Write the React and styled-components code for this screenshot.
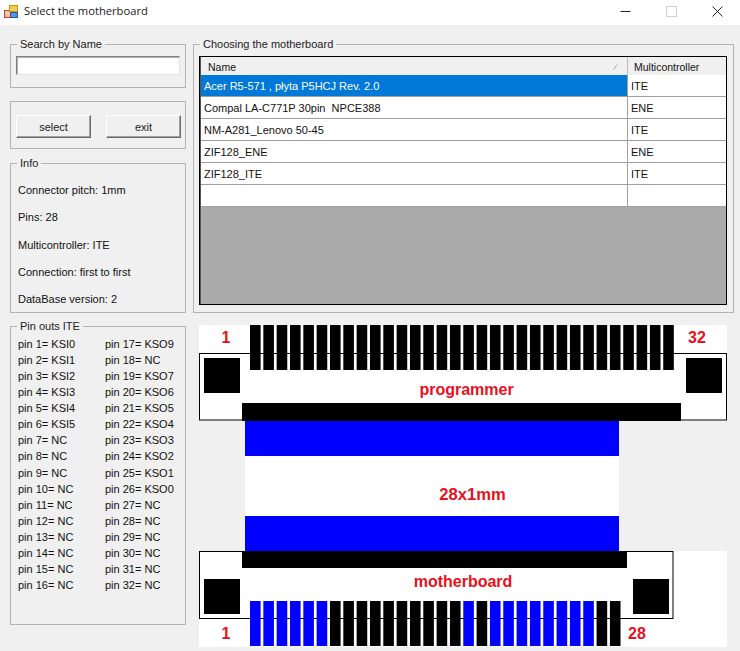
import React from "react";
import styled, { createGlobalStyle } from "styled-components";

const Global = createGlobalStyle`
  html, body { margin: 0; padding: 0; background: #f0f0f0; }
  * { box-sizing: border-box; }
`;

const Win = styled.div`
  width: 740px; height: 651px; overflow: hidden; background: #f0f0f0;
  font-family: "Liberation Sans", Arial, sans-serif; font-size: 11px; color: #111;
`;
const TitleBar = styled.header`
  height: 25px; background: #fff; display: flex; align-items: center; padding-left: 4px;
`;
const Title = styled.span`
  font-family: "Open Sans", sans-serif; font-size: 11.2px; margin-left: 6px; color: #222; flex: 1; margin-top: -5px;
`;
const WinButton = styled.div`
  width: 46px; height: 25px; display: flex; align-items: center; justify-content: center; margin-top: -3px;
`;
const Main = styled.main`
  display: grid; grid-template-columns: 176px 1fr; column-gap: 7px; padding: 12px 6px 0 10px;
`;
const Column = styled.div`
  display: flex; flex-direction: column;
`;
const Group = styled.fieldset`
  margin: ${p => p.$mt || 0}px 0 0; padding: 0; border: 1px solid #b4b4b4; height: ${p => p.$h}px; min-width: 0;
  display: flex; flex-direction: column;
  legend { margin-left: 6px; padding: 0 3px; line-height: 14px; font-size: 11px; color: #222; }
`;
const SearchBody = styled.div` padding: 5px 5px 0; `;
const SearchInput = styled.input`
  display: block; width: 164px; height: 19px; background: #fff; padding: 0;
  border-style: solid; border-width: 1px; border-color: #828282 #e4e4e4 #e4e4e4 #828282; box-shadow: inset 1px 1px 0 #b0b0b0;
`;
const Buttons = styled.div`
  display: flex; justify-content: space-between; padding: 13px 4px 0 5px;
`;
const Btn = styled.button`
  width: 75px; height: 23px; padding: 0; background: #f0f0f0; font: inherit; color: #222;
  border-style: solid; border-width: 1px; border-color: #fff #6a6a6a #6a6a6a #fff; box-shadow: inset -1px -1px 0 #a0a0a0;
`;
const InfoBody = styled.div`
  padding: 13px 0 0 7px; display: flex; flex-direction: column; row-gap: 13.35px; line-height: 14px;
`;
const PinGrid = styled.div`
  padding: 4px 0 0 7px; display: grid; grid-auto-flow: column; grid-template-rows: repeat(16, 16.07px); grid-template-columns: 87px 1fr; line-height: 14px;
`;
const TableFrame = styled.div`
  margin: 5px 5px 0; width: 528px; height: 249px; border: 1px solid #000; background: #ababab; box-shadow: inset 1px 1px 0 #555;
  display: flex; flex-direction: column; padding-left: 1px;
`;
const Row = styled.div`
  display: grid; grid-template-columns: 427px 98px; height: ${p => p.$h || 22}px; flex: none;
`;
const HeadCell = styled.div`
  background: #f0f0f0; display: flex; align-items: center; justify-content: space-between; padding: 2px 9px 0 ${p => p.$pl}px; border-right: ${p => p.$line ? "1px solid #b8b8b8" : "none"}; font-size: 10.5px;
`;
const Cell = styled.div`
  padding-left: ${p => p.$pl}px; line-height: 22px; overflow: hidden; white-space: pre;
  background: ${p => p.$sel ? "#0078d7" : "#fff"}; color: ${p => p.$sel ? "#fff" : "#111"};
  border-bottom: 1px solid #a0a0a0; border-right: ${p => p.$last ? "none" : "1px solid #a0a0a0"};
`;
const Sort = styled.svg` display: block; `;
const Diagram = styled.svg`
  display: block; width: 541px; height: 328px; margin-top: 6px;
`;
const Label = styled.text`
  font-family: "Liberation Sans", Arial, sans-serif; font-weight: 700; font-size: ${p => p.$size || 16}px; fill: #e8101c; text-anchor: middle;
`;

const pins = [
  "KSI0","KSI1","KSI2","KSI3","KSI4","KSI5","NC","NC","NC","NC","NC","NC","NC","NC","NC","NC",
  "KSO9","NC","KSO7","KSO6","KSO5","KSO4","KSO3","KSO2","KSO1","KSO0","NC","NC","NC","NC","NC","NC",
];
const rows = [
  ["Acer R5-571 , płyta P5HCJ Rev. 2.0","ITE"],
  ["Compal LA-C771P 30pin  NPCE388","ENE"],
  ["NM-A281_Lenovo 50-45","ITE"],
  ["ZIF128_ENE","ENE"],
  ["ZIF128_ITE","ITE"],
  ["",""],
];
const info = ["Connector pitch: 1mm","Pins: 28","Multicontroller: ITE","Connection: first to first","DataBase version: 2"];
const bluePin = i => i < 6 || i === 16 || (i >= 18 && i < 26);

function AppIcon() {
  return (
    <svg width="14" height="14" viewBox="0 0 14 14" style={{ flex: "none", marginTop: -3 }}>
      <rect x="0.5" y="6.5" width="6" height="7" fill="#f3c5a5" stroke="#cf3f28" />
      <rect x="5.5" y="1.5" width="8" height="6" fill="#f0cc50" stroke="#c8961e" />
      <rect x="6.5" y="8.5" width="7" height="5" fill="#5b8fe0" stroke="#2a55a0" />
    </svg>
  );
}

function Board() {
  // origin of the drawing is page (193, 319)
  const X = x => x - 193, Y = y => y - 319;
  return (
    <Diagram viewBox="0 0 541 328">
      <rect x={X(199)} y={Y(325)} width="528" height="96" fill="#fff" />
      <rect x={X(199.5)} y={Y(353.5)} width="527" height="66.5" fill="#fff" stroke="#000" />
      {Array.from({ length: 32 }, (_, i) => (
        <rect key={i} x={X(250 + i * 13.33)} y={Y(325)} width="10.6" height="45" fill="#000" />
      ))}
      <rect x={X(204)} y={Y(358)} width="36" height="35" fill="#000" />
      <rect x={X(686)} y={Y(358)} width="36" height="35" fill="#000" />
      <rect x={X(242)} y={Y(403)} width="439" height="18" fill="#000" />
      <Label x={X(226)} y={Y(343)}>1</Label>
      <Label x={X(697)} y={Y(343)}>32</Label>
      <Label x={X(466.5)} y={Y(395)}>programmer</Label>

      <rect x={X(245)} y={Y(421)} width="374" height="35" fill="#0000ff" />
      <rect x={X(245)} y={Y(456)} width="374" height="60" fill="#fff" />
      <rect x={X(245)} y={Y(516)} width="374" height="35" fill="#0000ff" />
      <Label $size={16.6} x={X(472.5)} y={Y(500)}>28x1mm</Label>

      <rect x={X(199)} y={Y(551)} width="528" height="96" fill="#fff" />
      <rect x={X(199.5)} y={Y(551.5)} width="473.5" height="67" fill="#fff" stroke="#000" />
      {Array.from({ length: 28 }, (_, i) => (
        <rect key={i} x={X(250 + i * 13.33)} y={Y(601)} width="10.6" height="45" fill={bluePin(i) ? "#0000ff" : "#000"} />
      ))}
      <rect x={X(204)} y={Y(579)} width="36" height="35" fill="#000" />
      <rect x={X(633)} y={Y(579)} width="36" height="35" fill="#000" />
      <rect x={X(242)} y={Y(551)} width="385" height="17" fill="#000" />
      <Label x={X(226)} y={Y(639)}>1</Label>
      <Label x={X(637)} y={Y(639)}>28</Label>
      <Label x={X(463)} y={Y(587)}>motherboard</Label>
    </Diagram>
  );
}

export default function App() {
  return (
    <Win>
      <Global />
      <TitleBar>
        <AppIcon />
        <Title>Select the motherboard</Title>
        <WinButton>
          <svg width="11" height="11" viewBox="0 0 11 11"><path d="M0.5 5.5H10.5" stroke="#222" /></svg>
        </WinButton>
        <WinButton>
          <svg width="11" height="11" viewBox="0 0 11 11"><rect x="0.5" y="0.5" width="10" height="10" fill="none" stroke="#d0d0d0" /></svg>
        </WinButton>
        <WinButton>
          <svg width="11" height="11" viewBox="0 0 11 11"><path d="M0.5 0.5L10.5 10.5M10.5 0.5L0.5 10.5" stroke="#222" /></svg>
        </WinButton>
      </TitleBar>
      <Main>
        <Column>
          <Group $h={51}>
            <legend>Search by Name</legend>
            <SearchBody><SearchInput /></SearchBody>
          </Group>
          <Group $h={48} $mt={13}>
            <Buttons>
              <Btn>select</Btn>
              <Btn>exit</Btn>
            </Buttons>
          </Group>
          <Group $h={157} $mt={7}>
            <legend>Info</legend>
            <InfoBody>
              {info.map(t => <div key={t}>{t}</div>)}
            </InfoBody>
          </Group>
          <Group $h={306} $mt={6}>
            <legend>Pin outs ITE</legend>
            <PinGrid>
              {pins.map((p, i) => <div key={i}>{`pin ${i + 1}= ${p}`}</div>)}
            </PinGrid>
          </Group>
        </Column>
        <Column>
          <Group $h={276}>
            <legend>Choosing the motherboard</legend>
            <TableFrame>
              <Row $h={18}>
                <HeadCell $pl={7} $line>
                  Name
                  <Sort width="5" height="6" viewBox="0 0 5 6"><path d="M0.5 5.5L4 0.5" stroke="#aaa" /></Sort>
                </HeadCell>
                <HeadCell $pl={6}>Multicontroller</HeadCell>
              </Row>
              {rows.map(([a, b], i) => (
                <Row key={i}>
                  <Cell $pl={3} $sel={i === 0}>{a}</Cell>
                  <Cell $pl={3} $last>{b}</Cell>
                </Row>
              ))}
            </TableFrame>
          </Group>
          <Board />
        </Column>
      </Main>
    </Win>
  );
}
